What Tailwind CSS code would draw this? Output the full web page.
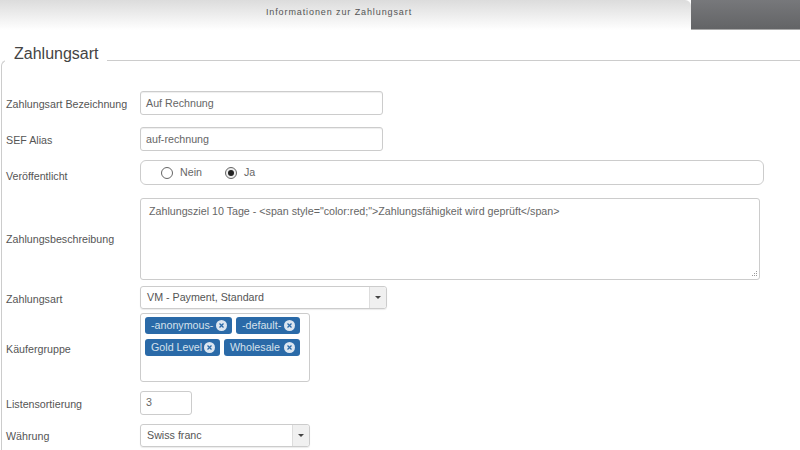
<!DOCTYPE html>
<html>
<head>
<meta charset="utf-8">
<script src="https://cdn.jsdelivr.net/npm/@tailwindcss/browser@4"></script>
</head>
<body class="bg-white w-[800px] h-[450px] overflow-hidden font-['Liberation_Sans',Arial,sans-serif] text-[10.7px] text-[#555]">
<header class="flex h-[30px]">
  <div class="w-[691px] flex justify-center items-start pt-[6px] pr-[13px] rounded-tr-[6px] bg-gradient-to-b from-[#dcdcdc] to-white text-[9px] leading-[12px] tracking-[0.9px] text-[#555]">Informationen zur Zahlungsart</div>
  <div class="flex-1 bg-gradient-to-b from-[#77787b] to-[#636466] border-b border-[#aaa]"></div>
</header>
<main class="relative mt-[30px] ml-[1px] h-[400px] border-t border-l border-[#ccc] rounded-tl-[6px] pt-[30px]">
  <h2 class="absolute left-[3px] top-[-19px] bg-white pl-[9px] pr-[8px] text-[16px] leading-[24px] font-normal text-[#444]">Zahlungsart</h2>
  <div class="flex flex-col pl-[4px] text-[#555]">
    <div class="flex items-center h-[24px]">
      <label class="w-[134px] pt-[2px]">Zahlungsart Bezeichnung</label>
      <div class="w-[243px] h-[24px] border border-[#ccc] rounded-[3px] shadow-[inset_0_1px_1px_rgba(0,0,0,0.07)] px-[5px] leading-[22px] text-[#666]">Auf Rechnung</div>
    </div>
    <div class="flex items-center h-[24px] mt-[12px]">
      <label class="w-[134px] pt-[2px]">SEF Alias</label>
      <div class="w-[243px] h-[24px] border border-[#ccc] rounded-[3px] shadow-[inset_0_1px_1px_rgba(0,0,0,0.07)] px-[5px] leading-[22px] text-[#666]">auf-rechnung</div>
    </div>
    <div class="flex items-center h-[25px] mt-[9px]">
      <label class="w-[134px] pt-[7px]">Veröffentlicht</label>
      <div class="w-[624px] h-[25px] border border-[#ccc] rounded-[6px] flex items-center pl-[20px] text-[#666] pb-[1px]">
        <span class="w-[12px] h-[12px] rounded-full border border-[#666] bg-white mt-[1px]"></span>
        <span class="ml-[7px]">Nein</span>
        <span class="ml-[23px] w-[12px] h-[12px] rounded-full border border-[#666] bg-[#eee] flex items-center justify-center mt-[1px]"><span class="w-[6px] h-[6px] rounded-full bg-[#222]"></span></span>
        <span class="ml-[7px]">Ja</span>
      </div>
    </div>
    <div class="flex items-center h-[82px] mt-[13px]">
      <label class="w-[134px] pt-[1px]">Zahlungsbeschreibung</label>
      <div class="relative w-[620px] h-[82px] border border-[#ccc] rounded-[3px] pl-[8px] pt-[5px] leading-[14px] text-[#666]">Zahlungsziel 10 Tage - &lt;span style="color:red;"&gt;Zahlungsfähigkeit wird geprüft&lt;/span&gt;
        <svg class="absolute right-[1px] bottom-[1px]" width="8" height="8" viewBox="0 0 8 8"><g fill="#999"><rect x="6" y="1" width="1" height="1"/><rect x="6" y="3" width="1" height="1"/><rect x="4" y="3" width="1" height="1"/><rect x="6" y="5" width="1" height="1"/><rect x="4" y="5" width="1" height="1"/><rect x="2" y="5" width="1" height="1"/></g></svg>
      </div>
    </div>
    <div class="flex items-center h-[23px] mt-[6px]">
      <label class="w-[134px] pt-[3px]">Zahlungsart</label>
      <div class="w-[247px] h-[23px] border border-[#ccc] rounded-[3px] flex shadow-[0_1px_1px_rgba(0,0,0,0.08)]">
        <span class="flex-1 pl-[6px] leading-[21px] text-[#555]">VM - Payment, Standard</span>
        <span class="w-[17px] border-l border-[#ddd] bg-[#f0f0f0] flex items-center justify-center rounded-r-[3px]"><span class="w-0 h-0 border-x-[3px] border-x-transparent border-t-[3px] border-t-[#444]"></span></span>
      </div>
    </div>
    <div class="flex items-center h-[69px] mt-[4px]">
      <label class="w-[134px] pt-[3px]">Käufergruppe</label>
      <div class="w-[170px] h-[69px] border border-[#ccc] rounded-[3px] px-[4px] pt-[3px] flex flex-wrap content-start gap-x-[4px] gap-y-[5px] text-[#d5e1ec]">
        <span class="h-[17px] w-[87px] bg-[#2a6aa8] rounded-[3px] flex items-center justify-between pl-[6px] pr-[5px]">-anonymous-<svg width="11" height="11" viewBox="0 0 11 11"><circle cx="5.5" cy="5.5" r="5.5" fill="#dce6f0"/><path d="M3.5 3.5l4 4M7.5 3.5l-4 4" stroke="#2a6aa8" stroke-width="1.3"/></svg></span>
        <span class="h-[17px] w-[64px] bg-[#2a6aa8] rounded-[3px] flex items-center justify-between pl-[6px] pr-[5px]">-default-<svg width="11" height="11" viewBox="0 0 11 11"><circle cx="5.5" cy="5.5" r="5.5" fill="#dce6f0"/><path d="M3.5 3.5l4 4M7.5 3.5l-4 4" stroke="#2a6aa8" stroke-width="1.3"/></svg></span>
        <span class="h-[17px] w-[75px] bg-[#2a6aa8] rounded-[3px] flex items-center justify-between pl-[6px] pr-[5px]">Gold Level<svg width="11" height="11" viewBox="0 0 11 11"><circle cx="5.5" cy="5.5" r="5.5" fill="#dce6f0"/><path d="M3.5 3.5l4 4M7.5 3.5l-4 4" stroke="#2a6aa8" stroke-width="1.3"/></svg></span>
        <span class="h-[17px] w-[76px] bg-[#2a6aa8] rounded-[3px] flex items-center justify-between pl-[6px] pr-[5px]">Wholesale<svg width="11" height="11" viewBox="0 0 11 11"><circle cx="5.5" cy="5.5" r="5.5" fill="#dce6f0"/><path d="M3.5 3.5l4 4M7.5 3.5l-4 4" stroke="#2a6aa8" stroke-width="1.3"/></svg></span>
      </div>
    </div>
    <div class="flex items-center h-[24px] mt-[9px]">
      <label class="w-[134px] pt-[2px]">Listensortierung</label>
      <div class="w-[52px] h-[24px] border border-[#ccc] rounded-[3px] px-[5px] leading-[20px] text-[#666]">3</div>
    </div>
    <div class="flex items-center h-[23px] mt-[9px]">
      <label class="w-[134px] pt-[2px]">Währung</label>
      <div class="w-[170px] h-[23px] border border-[#ccc] rounded-[3px] flex shadow-[0_1px_1px_rgba(0,0,0,0.08)]">
        <span class="flex-1 pl-[6px] leading-[20px] text-[#555]">Swiss franc</span>
        <span class="w-[17px] border-l border-[#ddd] bg-[#f0f0f0] flex items-center justify-center rounded-r-[3px]"><span class="w-0 h-0 border-x-[3px] border-x-transparent border-t-[3px] border-t-[#444]"></span></span>
      </div>
    </div>
  </div>
</main>
</body>
</html>
